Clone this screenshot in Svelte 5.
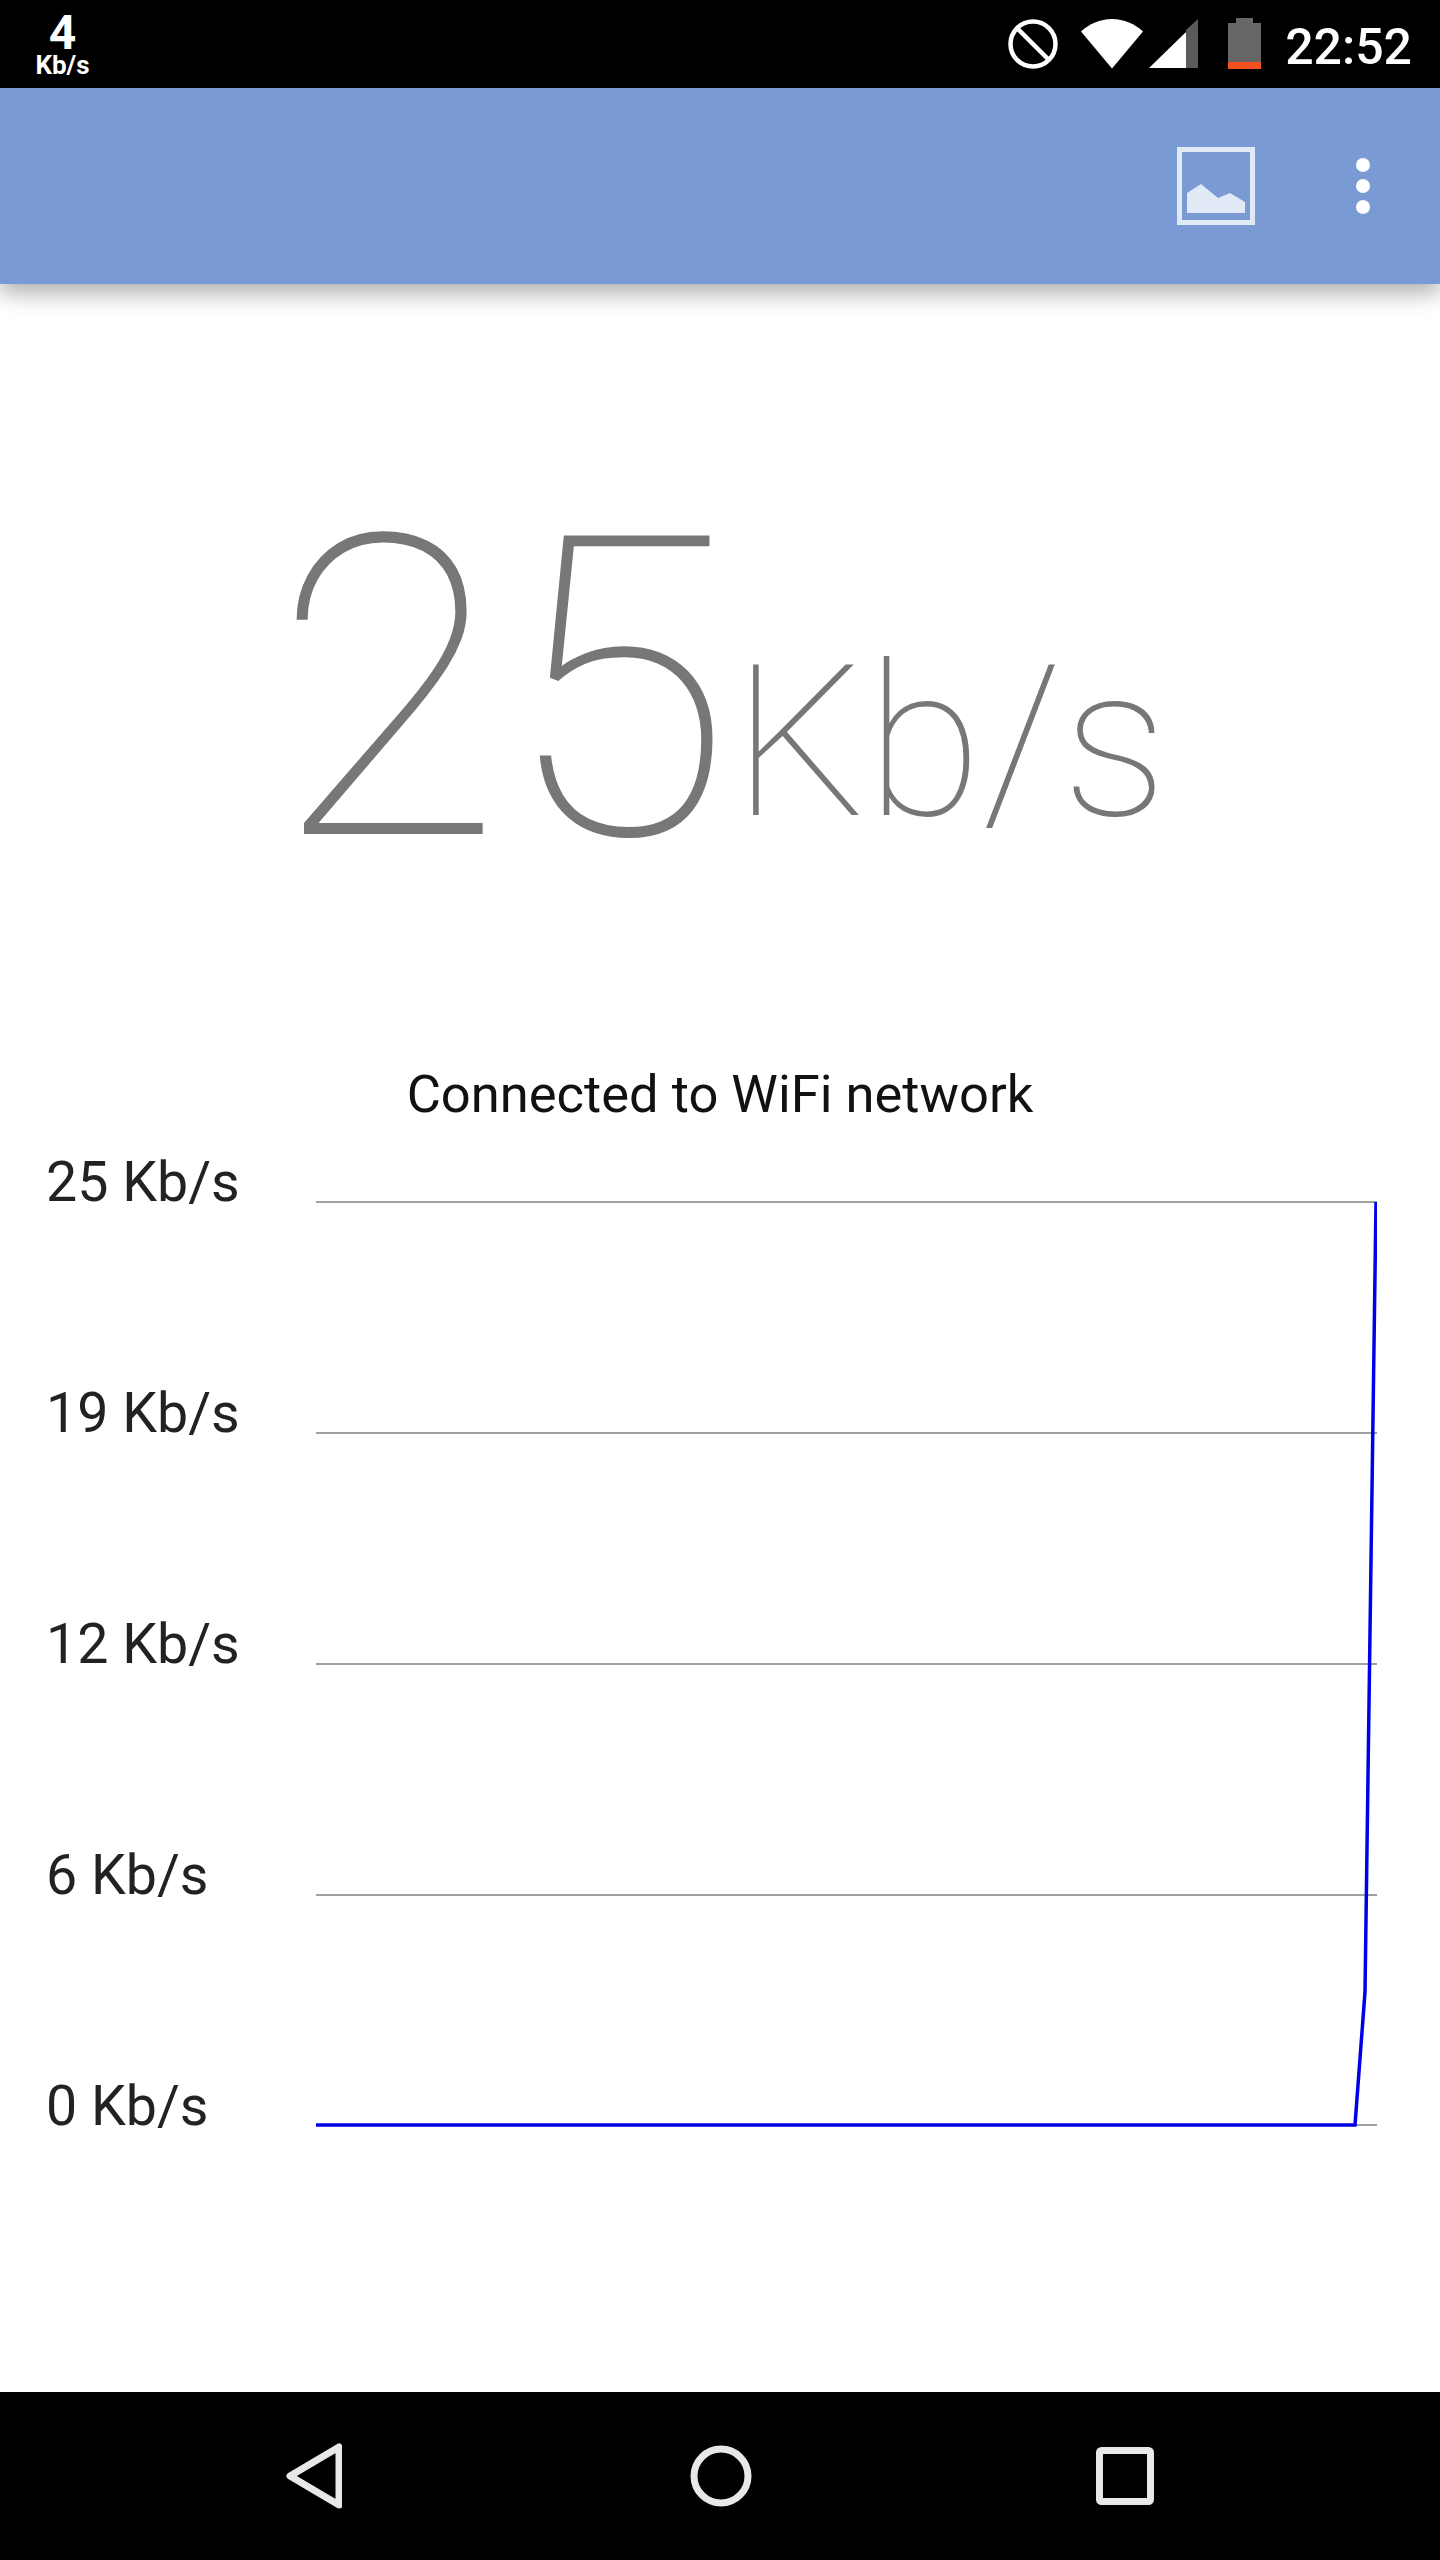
<script>
  const labels = ["25 Kb/s", "19 Kb/s", "12 Kb/s", "6 Kb/s", "0 Kb/s"];
  const gridY = [2, 233, 464, 695, 925];
</script>

<div class="page">
  <header class="status">
    <div class="rate">
      <span class="rate-num">4</span>
      <span class="rate-unit">Kb/s</span>
    </div>
    <div class="status-right">
      <svg class="i-block" width="50" height="50" viewBox="0 0 50 50">
        <circle cx="25" cy="25" r="22.5" fill="none" stroke="#fff" stroke-width="4.5" />
        <path d="M9 9L41 41" stroke="#fff" stroke-width="4.5" />
      </svg>
      <svg class="i-wifi" width="62" height="50" viewBox="0 0 62 50">
        <path d="M0 12.5C8 5 19 0 31 0s23 5 31 12.5L31 49.5z" fill="#fff" />
      </svg>
      <svg class="i-signal" width="50" height="50" viewBox="0 0 50 50">
        <path d="M49 0V49H37V11z" fill="#5a5a5a" />
        <path d="M37 13V49H0z" fill="#fff" />
      </svg>
      <svg class="i-batt" width="33" height="51" viewBox="0 0 33 51">
        <path d="M8 0H25V5H33V51H0V5H8z" fill="#666" />
        <rect y="44" width="33" height="7" fill="#f4511e" />
      </svg>
      <span class="clock">22:52</span>
    </div>
  </header>

  <div class="appbar">
    <svg class="i-chart" width="78" height="78" viewBox="0 0 78 78">
      <rect x="2.5" y="2.5" width="73" height="73" fill="none" stroke="#e2e9f6" stroke-width="5" />
      <path d="M10 46L24 37L41 51L53 46L68 55V66H10z" fill="#e2e9f6" />
    </svg>
    <div class="dots"><i></i><i></i><i></i></div>
  </div>

  <main class="content">
    <div class="hero">
      <span class="big">25</span>
      <span class="unit">Kb/s</span>
    </div>
    <div class="caption">Connected to WiFi network</div>
    <div class="chart">
      <div class="axis">
        {#each labels as l}
          <div class="tick">{l}</div>
        {/each}
      </div>
      <svg class="plot" width="1061" height="930" viewBox="0 0 1061 930">
        {#each gridY as y}
          <line x1="0" x2="1061" y1={y} y2={y} stroke="#a0a0a0" stroke-width="2" />
        {/each}
        <polyline points="0,925 1039,925 1049,792 1060,2" fill="none" stroke="#0000e6" stroke-width="3.5" />
      </svg>
    </div>
  </main>

  <nav class="navbar">
    <svg width="56" height="66" viewBox="0 0 56 66">
      <path d="M53 4V62L4 33z" fill="none" stroke="#e8e8e8" stroke-width="7" stroke-linejoin="round" />
    </svg>
    <svg class="i-home" width="62" height="62" viewBox="0 0 62 62">
      <circle cx="31" cy="31" r="27" fill="none" stroke="#e8e8e8" stroke-width="7" />
    </svg>
    <svg width="58" height="58" viewBox="0 0 58 58">
      <rect x="3.5" y="3.5" width="51" height="51" rx="2" fill="none" stroke="#e8e8e8" stroke-width="7" />
    </svg>
  </nav>
</div>

<style>
  :global(body) {
    margin: 0;
    background: #fff;
  }

  .page {
    width: 1440px;
    height: 2560px;
    display: flex;
    flex-direction: column;
    font-family: Roboto, "Liberation Sans", sans-serif;
    overflow: hidden;
  }

  .status {
    height: 88px;
    flex: none;
    background: #000;
    color: #fff;
    display: flex;
    justify-content: space-between;
  }

  .rate {
    width: 125px;
    display: flex;
    flex-direction: column;
    align-items: center;
    font-weight: 700;
    padding-top: 13px;
  }

  .rate-num {
    font-size: 48px;
    line-height: 40px;
  }

  .rate-unit {
    font-size: 26px;
    line-height: 24px;
  }

  .status-right {
    display: flex;
    align-items: flex-start;
    padding: 19px 28px 0 0;
  }

  .i-wifi {
    margin-left: 23px;
  }

  .i-signal {
    margin-left: 6px;
  }

  .i-batt {
    margin: -1px 0 0 29px;
  }

  .clock {
    margin-left: 24px;
    font-size: 50px;
    font-weight: 500;
    line-height: 56px;
  }

  .appbar {
    height: 196px;
    flex: none;
    background: #7a9ad4;
    box-shadow: 0 10px 20px rgba(0, 0, 0, 0.3);
    position: relative;
    display: flex;
    justify-content: flex-end;
    align-items: center;
    padding-right: 70px;
    box-sizing: border-box;
  }

  .i-chart {
    margin-right: 101px;
  }

  .dots {
    display: flex;
    flex-direction: column;
    gap: 7px;
  }

  .dots i {
    width: 14px;
    height: 14px;
    border-radius: 50%;
    background: #fff;
  }

  .content {
    flex: 1;
    color: #222;
  }

  .hero {
    display: flex;
    align-items: flex-end;
    justify-content: center;
    color: #777;
    font-weight: 100;
    height: 660px;
    box-sizing: border-box;
    padding: 161px 0 7px 0;
  }

  .big {
    font-size: 420px;
    line-height: 492px;
  }

  .unit {
    font-size: 211px;
    line-height: 247px;
    margin-bottom: 70px;
  }

  .caption {
    text-align: center;
    font-size: 52.5px;
    line-height: 64px;
    color: #111;
    margin-top: 118px;
  }

  .chart {
    display: flex;
    margin-top: 74px;
  }

  .axis {
    width: 316px;
    flex: none;
    box-sizing: border-box;
    padding-left: 46px;
    margin-top: -49px;
    display: flex;
    flex-direction: column;
    gap: 167px;
  }

  .tick {
    font-size: 55.5px;
    line-height: 64px;
  }

  .navbar {
    height: 168px;
    flex: none;
    background: #000;
    display: flex;
    align-items: center;
    justify-content: space-between;
    padding: 0 286px;
    box-sizing: border-box;
  }

  .i-home {
    margin-left: 3px;
  }
</style>
